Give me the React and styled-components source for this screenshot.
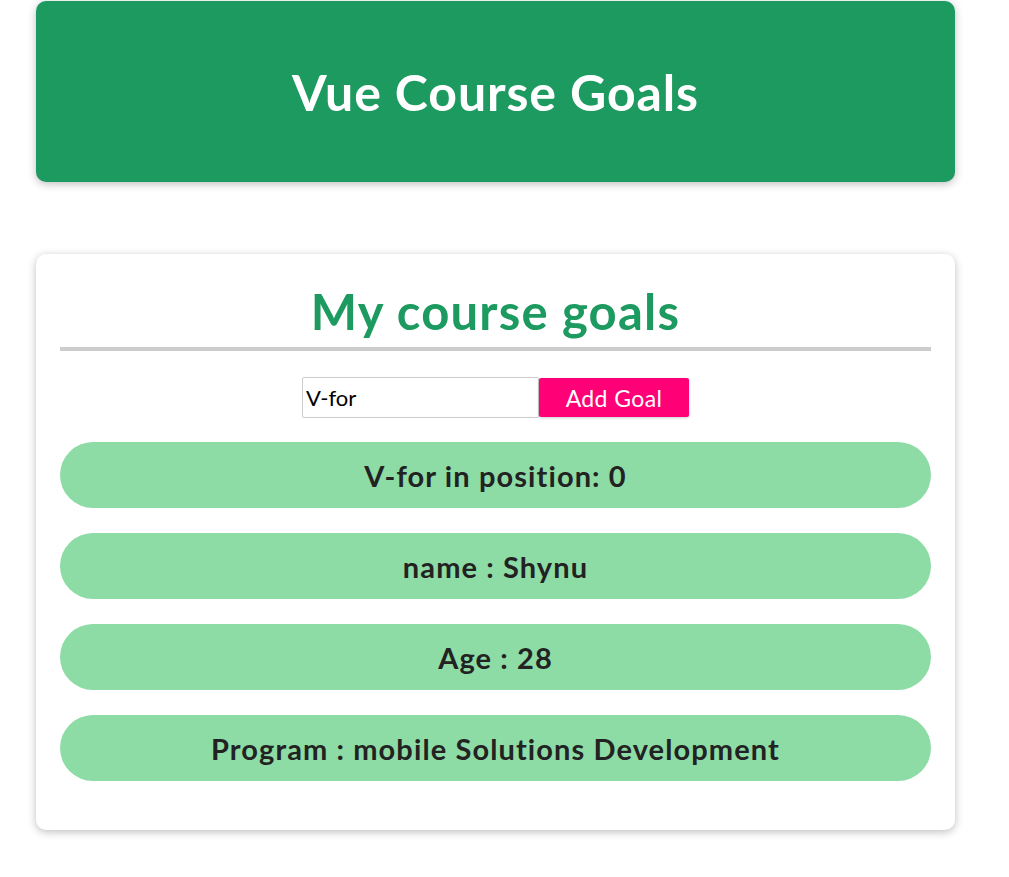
import React from "react";
import styled, { createGlobalStyle } from "styled-components";

const Global = createGlobalStyle`
  html, body { margin: 0; padding: 0; background: #fff; }
  body { font-family: "Lato", "Open Sans", sans-serif; }
  * { box-sizing: border-box; }
`;

const Page = styled.div`
  padding: 1px 0 40px 36px;
  display: flex;
  flex-direction: column;
  gap: 72px;
`;

const Header = styled.header`
  width: 919px;
  height: 181px;
  background: #1d9a5f;
  color: #fff;
  border-radius: 10px;
  box-shadow: 0 2px 8px rgba(0, 0, 0, 0.26);
  display: flex;
  align-items: center;
  justify-content: center;
`;

const HeaderTitle = styled.h1`
  margin: 0;
  font-size: 50px;
  font-weight: 700;
  letter-spacing: 0.9px;
`;

const Card = styled.section`
  width: 919px;
  background: #fff;
  border-radius: 10px;
  box-shadow: 0 2px 8px rgba(0, 0, 0, 0.26);
  padding: 28px 24px 49px;
  display: flex;
  flex-direction: column;
  align-items: stretch;
`;

const CardTitle = styled.h2`
  margin: 0;
  text-align: center;
  color: #1d9a5f;
  font-size: 49px;
  font-weight: 700;
  line-height: 58px;
  letter-spacing: 1.2px;
  padding-bottom: 7px;
  border-bottom: 4px solid #ccc;
`;

const Form = styled.div`
  display: flex;
  justify-content: center;
  align-items: center;
  margin: 26px 0 24px;
`;

const Input = styled.input`
  width: 237px;
  height: 41px;
  border: 1px solid #ccc;
  border-radius: 2px;
  font-family: inherit;
  font-size: 22px;
  padding: 0 3px;
  color: #000;
  outline: none;
`;

const Button = styled.button`
  width: 150px;
  height: 39px;
  border: none;
  border-radius: 2px;
  background: #ff0077;
  color: #fff;
  font-family: inherit;
  font-size: 23px;
  letter-spacing: 0.4px;
  box-shadow: 0 1px 3px rgba(0, 0, 0, 0.2);
`;

const List = styled.ul`
  list-style: none;
  margin: 0;
  padding: 0;
  display: flex;
  flex-direction: column;
  gap: 25px;
`;

const Item = styled.li`
  height: 66px;
  border-radius: 33px;
  background: #8ddba5;
  color: #222;
  font-size: 29px;
  font-weight: 700;
  letter-spacing: 1.1px;
  display: flex;
  align-items: center;
  justify-content: center;
`;

const goals = [
  "V-for in position: 0",
  "name : Shynu",
  "Age : 28",
  "Program : mobile Solutions Development",
];

export default function App() {
  return (
    <>
      <Global />
      <Page>
        <Header>
          <HeaderTitle>Vue Course Goals</HeaderTitle>
        </Header>
        <Card>
          <CardTitle>My course goals</CardTitle>
          <Form>
            <Input defaultValue="V-for" />
            <Button>Add Goal</Button>
          </Form>
          <List>
            {goals.map((g) => (
              <Item key={g}>{g}</Item>
            ))}
          </List>
        </Card>
      </Page>
    </>
  );
}
